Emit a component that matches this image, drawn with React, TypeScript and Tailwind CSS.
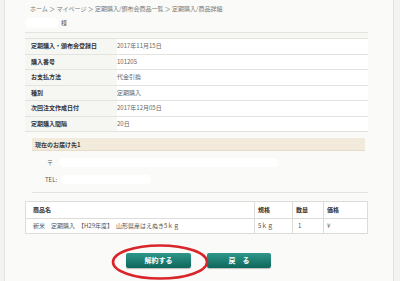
import React from 'react';

const font = { fontFamily: '"Noto Sans CJK JP", "Noto Sans", sans-serif' };

const rows: [string, string][] = [
  ['定期購入・頒布会登録日', '2017年11月15日'],
  ['購入番号', '101205'],
  ['お支払方法', '代金引換'],
  ['種別', '定期購入'],
  ['次回注文作成日付', '2017年12月05日'],
  ['定期購入間隔', '20日'],
];

export default function App() {
  return (
    <div className="w-[400px] h-[281px] overflow-hidden bg-[#f3f3f1] flex" style={font}>
      <div className="ml-[4px] w-[390px] h-full bg-[#fafaf8] border-x border-[#e2e2df] pl-[20px] flex flex-col">
        {/* breadcrumb */}
        <div className="h-[13px] pt-[5px] pl-[5px] text-[6px] leading-[8px] text-[#777] whitespace-nowrap">
          ホーム ＞ マイページ ＞ 定期購入/頒布会商品一覧 ＞ 定期購入/商品詳細
        </div>
        <div className="h-[19px] flex items-center">
          <div className="w-[33px] h-[10px] bg-white rounded-full" />
          <span className="ml-[3px] text-[6px] text-[#444]">様</span>
        </div>

        {/* info table */}
        <div className="w-[343px] border-t border-[#e3e3df]">
          <div className="h-[6px] border-b border-[#e3e3df] bg-[#f7f7f4]" />
          {rows.map(([k, v]) => (
            <div key={k} className="h-[15.5px] flex border-b border-[#e3e3df] text-[6px] leading-[14px]">
              <div className="w-[92px] pl-[6px] font-bold text-[#333] bg-[#f6f6f3]">{k}</div>
              <div className="flex-1 pl-[0px] text-[#666] bg-white">{v}</div>
            </div>
          ))}
        </div>

        {/* address */}
        <div className="w-[343px] pl-[7px] mt-[6px]">
          <div className="w-[333px] h-[13px] bg-[#f2eadb] border-b border-[#e6dcc8] pl-[3px] text-[6px] leading-[13px] font-bold text-[#3a3a3a]">
            現在のお届け先1
          </div>
          <div className="h-[42px] border-b border-[#e3e3df] text-[6px] text-[#555] flex flex-col">
            <div className="h-[17px] mt-[3px] flex items-center">
              <span className="ml-[15px]">〒</span>
              <div className="ml-[6px] w-[220px] h-[9px] bg-white rounded-full" />
            </div>
            <div className="h-[17px] flex items-center">
              <span className="ml-[13px]">TEL:</span>
              <div className="ml-[4px] w-[90px] h-[9px] bg-white rounded-full" />
            </div>
          </div>
        </div>

        {/* product table */}
        <div className="w-[343px] mt-[8px] border border-[#dcdcd8] bg-white text-[6px]">
          <div className="h-[17px] flex border-b border-[#dcdcd8] font-bold text-[#333] leading-[16px]">
            <div className="w-[229px] pl-[7px] border-r border-[#dcdcd8]">商品名</div>
            <div className="w-[38px] pl-[3px] border-r border-[#dcdcd8]">規格</div>
            <div className="w-[31px] pl-[3px] border-r border-[#dcdcd8]">数量</div>
            <div className="flex-1 pl-[3px]">価格</div>
          </div>
          <div className="h-[14px] flex text-[#555] leading-[14px]">
            <div className="w-[229px] pl-[7px] border-r border-[#dcdcd8] whitespace-nowrap">
              新米　定期購入　【H29年度】　山形県産はえぬき5ｋｇ
            </div>
            <div className="w-[38px] pl-[3px] border-r border-[#dcdcd8]">5ｋｇ</div>
            <div className="w-[31px] pl-[5px] border-r border-[#dcdcd8]">1</div>
            <div className="flex-1 pl-[3px]">¥</div>
          </div>
        </div>

        {/* buttons */}
        <div className="relative mt-[19px] flex pl-[101px] gap-[16px]">
          <button className="w-[65px] h-[15px] rounded-[2px] bg-gradient-to-b from-[#2e978a] to-[#0e675b] text-white text-[7px] font-bold leading-[15px] shadow-[0_1px_1px_rgba(0,0,0,0.25)]">
            解約する
          </button>
          <button className="w-[64px] h-[15px] rounded-[2px] bg-gradient-to-b from-[#2e978a] to-[#0e675b] text-white text-[7px] font-bold leading-[15px] shadow-[0_1px_1px_rgba(0,0,0,0.25)]">
            戻　る
          </button>
          <svg className="absolute left-[86px] top-[-10px] pointer-events-none" width="100" height="40" viewBox="0 0 100 40">
            <ellipse cx="49" cy="19" rx="47" ry="16.5" fill="none" stroke="#d8262b" strokeWidth="2.6" />
          </svg>
        </div>
      </div>
    </div>
  );
}
